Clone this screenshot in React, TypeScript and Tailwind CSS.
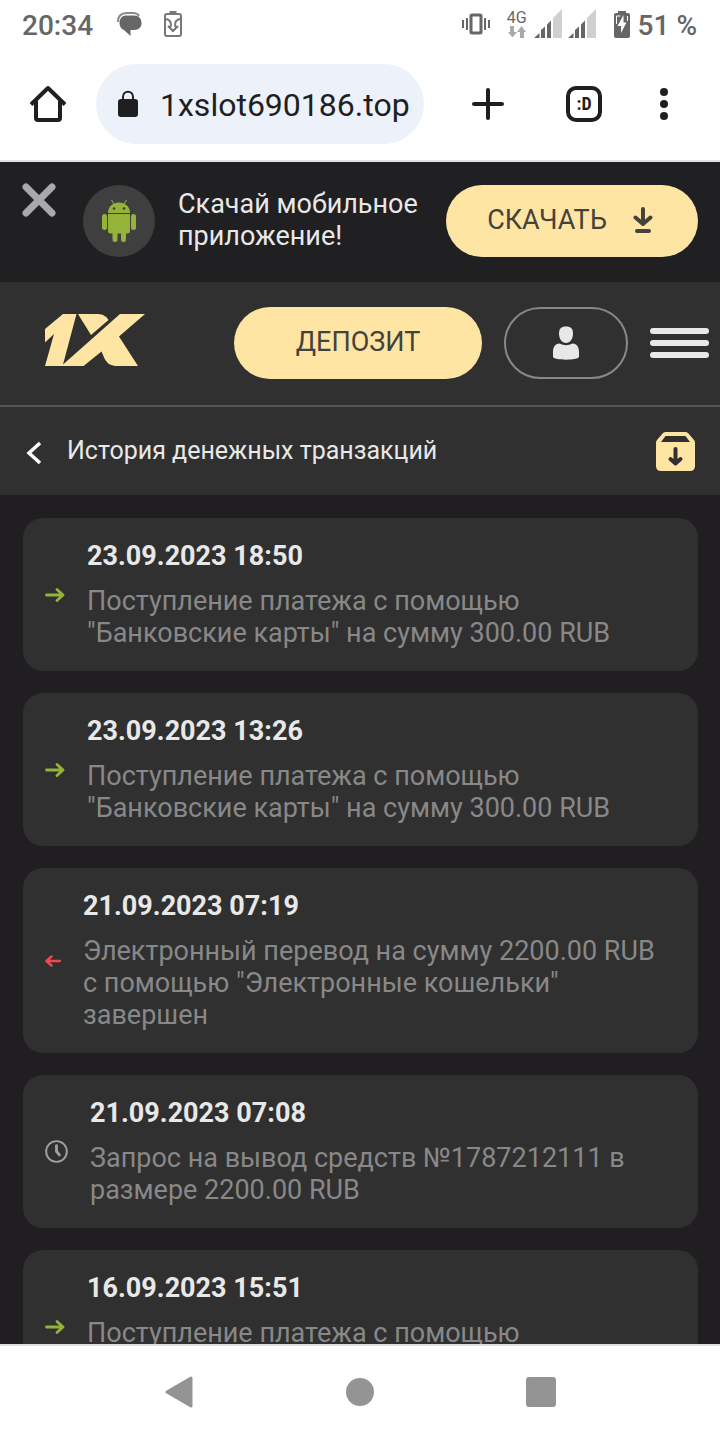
type Kind = 'in' | 'out' | 'pending'

interface Transaction {
    date: string
    text: string
    kind: Kind
}

const transactions: Transaction[] = [
    { date: '23.09.2023 18:50', text: 'Поступление платежа с помощью "Банковские карты" на сумму 300.00 RUB', kind: 'in' },
    { date: '23.09.2023 13:26', text: 'Поступление платежа с помощью "Банковские карты" на сумму 300.00 RUB', kind: 'in' },
    { date: '21.09.2023 07:19', text: 'Электронный перевод на сумму 2200.00 RUB с помощью "Электронные кошельки" завершен', kind: 'out' },
    { date: '21.09.2023 07:08', text: 'Запрос на вывод средств №1787212111 в размере 2200.00 RUB', kind: 'pending' },
    { date: '16.09.2023 15:51', text: 'Поступление платежа с помощью "Банковские карты" на сумму 300.00 RUB', kind: 'in' },
]

const Signal = () => (
    <svg width="28" height="30" viewBox="0 0 28 30">
        <path d="M0 29L5.500 24V29ZM7 29V21L11 17.500V29ZM13 29V15.500L17 11.500V29Z" fill="#666" />
        <path d="M19 29V9L28 0V29Z" fill="#d0d0d0" />
    </svg>
)

const StatusBar = () => (
    <div className="flex h-12 shrink-0 items-center justify-between pr-[23px] pl-[22px] text-[28px] font-medium text-[#666]">
        <div className="flex items-center">
            <span className="mt-1">20:34</span>
            <svg className="ml-6" width="26" height="26" viewBox="0 0 26 26">
                <path d="M1 11C1 4 5 2 10 2H16C19 2 21 3 22 5" fill="none" stroke="#888" strokeWidth="2" />
                <path d="M9 4.500H17C22 4.500 24.500 8 24.500 12C24.500 16 22 19 17 19H13.500V25L7 19C4 18 2.500 15 2.500 12C2.500 8 5 4.500 9 4.500Z" fill="#666" />
            </svg>
            <svg className="ml-5" width="20" height="26" viewBox="0 0 20 26" fill="none" stroke="#777" strokeWidth="2">
                <path d="M6.500 1H13.500" strokeWidth="3" />
                <rect x="2" y="3" width="16" height="22" rx="2" />
                <path d="M3 8C8 9 9 13 7 17M17 8C12 9 11 13 13 17M5 15L10 20L15 15" />
            </svg>
        </div>
        <div className="flex items-center">
            <svg width="28" height="22" viewBox="0 0 28 22" fill="none" stroke="#666" strokeWidth="2">
                <rect x="9" y="2" width="10" height="18" rx="1" strokeWidth="3" />
                <path d="M5 5V17M23 5V17M1 7V15M27 7V15" />
            </svg>
            <div className="ml-[18px] flex w-[18px] flex-col items-center">
                <span className="text-base leading-4 font-normal">4G</span>
                <svg width="18" height="12" viewBox="0 0 18 12" fill="#aaa">
                    <path d="M2 0H6V6H9L4.500 11.500L0 6H2ZM12 12H16V6H18L13.500 0L9 6H12Z" />
                </svg>
            </div>
            <div className="ml-2 flex gap-[6px]">
                <Signal />
                <Signal />
            </div>
            <svg className="ml-[18px] mr-2" width="16" height="27" viewBox="0 0 16 27">
                <path d="M4 0H12V2H14Q16 2 16 4V25Q16 27 14 27H2Q0 27 0 25V4Q0 2 2 2H4Z" fill="#666" />
                <path d="M9.500 4L3.500 15H7V22L12.500 11.500H9.500Z" fill="#fff" />
                <path d="M2.500 13V5H6.500M13.500 5V10" fill="none" stroke="#fff" />
            </svg>
            <span className="mt-1">51 %</span>
        </div>
    </div>
)

const BrowserBar = () => (
    <div className="flex h-[114px] shrink-0 items-start border-b-2 border-[#e0e0e0] pt-4 pl-7">
        <button aria-label="Home" className="flex h-20 w-10 items-center justify-center">
            <svg width="40" height="40" viewBox="0 0 40 40" fill="none" stroke="#1f1f1f" strokeWidth="4" strokeLinejoin="round">
                <path d="M3 20.500L20 4L37 20.500M8 17V34Q8 36 10 36H30Q32 36 32 34V17" />
            </svg>
        </button>
        <div className="ml-7 flex h-20 min-w-0 flex-1 items-center rounded-full bg-[#ecf1fa] pl-[22px]">
            <svg width="20" height="28" viewBox="0 0 20 28">
                <rect y="9" width="20" height="18" rx="3" fill="#1f1f1f" />
                <path d="M5 10V7C5 0 15 0 15 7V10" fill="none" stroke="#1f1f1f" strokeWidth="2" />
            </svg>
            <input aria-label="URL" defaultValue="1xslot690186.top" className="ml-[22px] min-w-0 flex-1 bg-transparent pt-[2px] text-[32px] text-[#1f1f1f] outline-none" />
        </div>
        <div className="flex h-20 w-[296px] shrink-0 items-center justify-between pr-[52px] pl-12">
            <button aria-label="New tab" className="pr-1">
                <svg width="32" height="32" viewBox="0 0 32 32" stroke="#1f1f1f" strokeWidth="4" strokeLinecap="round">
                    <path d="M16 2V30M2 16H30" />
                </svg>
            </button>
            <button aria-label="Tabs" className="flex size-9 items-center justify-center rounded-[10px] border-4 border-[#1f1f1f] font-[Roboto_Condensed,Roboto,sans-serif] text-lg font-bold text-[#1f1f1f]">
                :D
            </button>
            <button aria-label="Menu">
                <svg width="8" height="32" viewBox="0 0 8 32" fill="#1f1f1f">
                    <circle cx="4" cy="4" r="4" />
                    <circle cx="4" cy="16" r="4" />
                    <circle cx="4" cy="28" r="4" />
                </svg>
            </button>
        </div>
    </div>
)

const AppBanner = () => (
    <div className="flex h-[120px] shrink-0 items-center bg-[#202022] px-[22px] pb-[2px]">
        <button aria-label="Закрыть" className="mt-[21px] self-start">
            <svg width="34" height="34" viewBox="0 0 34 34" stroke="#a9a9ab" strokeWidth="7" strokeLinecap="round">
                <path d="M4 4L30 30M30 4L4 30" />
            </svg>
        </button>
        <div className="ml-[27px] flex size-[72px] shrink-0 items-center justify-center rounded-full bg-[#3f3f3f]">
            <svg width="34" height="42" viewBox="0 0 34 42" fill="#95b339">
                <path d="M6 13C6 -1 28 -1 28 13Z" />
                <path d="M12 4L9.500 0M22 4L24.500 0" stroke="#95b339" strokeWidth="1" />
                <path d="M6 14H28V31Q28 33.500 25.500 33.500H24V39.500Q24 42 21.500 42Q19 42 19 39.500V33.500H15.500V39.500Q15.500 42 13 42Q10.500 42 10.500 39.500V33.500H8.500Q6 33.500 6 31Z" />
                <rect y="14" width="5" height="16" rx="2.500" />
                <rect x="29" y="14" width="5" height="16" rx="2.500" />
                <circle cx="12" cy="8.500" r="1.300" fill="#3f3f3f" />
                <circle cx="22" cy="8.500" r="1.300" fill="#3f3f3f" />
            </svg>
        </div>
        <p className="ml-[23px] min-w-0 flex-1 pb-[2px] text-[27px] leading-8 text-[#e8e8e8]">Скачай мобильное приложение!</p>
        <button className="flex h-[72px] w-[252px] shrink-0 items-center justify-center gap-[26px] rounded-full bg-[#ffe5a3] pr-1 pb-[2px] text-[27px] text-[#44423c]">
            СКАЧАТЬ
            <svg width="20" height="26" viewBox="0 0 20 26" fill="none" stroke="#44423c" strokeWidth="4" strokeLinecap="round" strokeLinejoin="round">
                <path d="M10 2V17M2.500 10.500L10 17L17.500 10.500" />
                <path d="M4 24H16" />
            </svg>
        </button>
    </div>
)

const Header = () => (
    <header className="flex h-[125px] shrink-0 items-center border-b-2 border-[#555] bg-[#303030] pr-[11px] pb-[2px] pl-[45px]">
        <a href="#" aria-label="1X" className="mb-[6px]">
            <svg width="100" height="52" viewBox="0 0 100 52" fill="#ffe5a3">
                <path d="M0 15L18 0H31.500L18 50.500L75 0H100L74 22.500L93 52H73C61 52 60 45 56.500 37.500L38.500 52H0L9 20L0 28.500Z" />
                <path d="M33 0H53C58 0 62 3 63.500 6L46 21Z" />
            </svg>
        </a>
        <button className="ml-auto h-[72px] w-[248px] shrink-0 rounded-full bg-[#ffe5a3] text-[27px] text-[#44423c]">ДЕПОЗИТ</button>
        <button aria-label="Профиль" className="ml-[22px] flex h-[72px] w-[124px] shrink-0 items-center justify-center rounded-full border-2 border-[#888]">
            <svg width="26" height="34" viewBox="0 0 26 34" fill="#e8e8e8">
                <path d="M13 0.500C18 0.500 20 3 20 7.500C20 13 17 17 13 17C9 17 6 13 6 7.500C6 3 8 0.500 13 0.500Z" />
                <path d="M6.500 17.500Q13 21 19.500 17.500C24 18 26 21 26 26V31C25 34.500 1 34.500 0 31V26C0 21 2 18 6.500 17.500Z" />
            </svg>
        </button>
        <button aria-label="Меню" className="ml-[22px] flex w-[59px] shrink-0 flex-col gap-[6px]">
            <span className="h-[6px] w-full rounded-full bg-[#e8e8e8]"></span>
            <span className="h-[6px] w-full rounded-full bg-[#e8e8e8]"></span>
            <span className="h-[6px] w-full rounded-full bg-[#e8e8e8]"></span>
        </button>
    </header>
)

const TitleBar = () => (
    <div className="flex h-[88px] shrink-0 items-center bg-[#303030] pr-[25px] pl-[26px]">
        <button aria-label="Назад" className="pt-1">
            <svg width="16" height="24" viewBox="0 0 16 24" fill="none" stroke="#fff" strokeWidth="3.500">
                <path d="M14 2L3 12L14 22" />
            </svg>
        </button>
        <h1 className="ml-[25px] flex-1 text-[25px] text-[#e8e8e8]">История денежных транзакций</h1>
        <button aria-label="Архив">
            <svg width="39" height="39" viewBox="0 0 39 39">
                <path d="M10 0H29Q31 0 32 1L38 8Q39 9 39 11V34Q39 39 34 39H5Q0 39 0 34V11Q0 9 1 8L7 1Q8 0 10 0Z" fill="#ffe5a3" />
                <path d="M9.500 4H29.500L34 10H5Z" fill="#303030" />
                <path d="M19.500 17V31M14.500 27L19.500 31.500L24.500 27" fill="none" stroke="#303030" strokeWidth="4" strokeLinecap="round" strokeLinejoin="round" />
            </svg>
        </button>
    </div>
)

const KindIcon = ({ kind }: { kind: Kind }) => {
    if (kind === 'in') {
        return (
            <svg className="shrink-0" width="20" height="14" viewBox="0 0 20 14" fill="none" stroke="#95b339" strokeWidth="2.800" strokeLinecap="round" strokeLinejoin="round">
                <path d="M1.500 7H17.500M12 1.500L18 7L12 12.500" />
            </svg>
        )
    }
    if (kind === 'out') {
        return (
            <svg className="shrink-0" width="16" height="12" viewBox="0 0 16 12" fill="none" stroke="#f0484e" strokeWidth="2.400" strokeLinecap="round" strokeLinejoin="round">
                <path d="M15 6H2M6.500 1.500L1.500 6L6.500 10.500" />
            </svg>
        )
    }
    return (
        <svg className="shrink-0" width="23" height="23" viewBox="0 0 24 24" fill="none" stroke="#a0a0a0" strokeWidth="2" strokeLinecap="round">
            <circle cx="12" cy="12" r="10.800" />
            <path d="M12 6V12L15 15.500" strokeWidth="3" />
        </svg>
    )
}

const TransactionCard = ({ item }: { item: Transaction }) => (
    <li className="flex shrink-0 items-center gap-[22px] rounded-[20px] bg-[#303030] pt-[22px] pr-8 pb-[22px] pl-[22px]">
        <KindIcon kind={item.kind} />
        <div className="min-w-0 flex-1 text-[27px] leading-8">
            <h2 className="font-bold text-[#e8e8e8]">{item.date}</h2>
            <p className="mt-[13px] text-[#888]">{item.text}</p>
        </div>
    </li>
)

const NavBar = () => (
    <nav className="flex h-24 shrink-0 items-center justify-around border-t-2 border-[#e0e0e0] bg-white px-[88px] pb-[2px]">
        <button aria-label="Back">
            <svg width="30" height="32" viewBox="0 0 30 32">
                <path d="M27 2V30L3 16Z" fill="#949494" stroke="#949494" strokeWidth="3" strokeLinejoin="round" />
            </svg>
        </button>
        <button aria-label="Home" className="size-7 rounded-full bg-[#949494]"></button>
        <button aria-label="Recent" className="size-[30px] rounded-[3px] bg-[#949494]"></button>
    </nav>
)

export default function App() {
    return (
        <div className="flex h-screen flex-col bg-white font-[Roboto,sans-serif]">
            <StatusBar />
            <BrowserBar />
            <AppBanner />
            <Header />
            <TitleBar />
            <main className="min-h-0 flex-1 overflow-hidden bg-[#201e21] px-[22px] pt-[23px] pl-[23px]">
                <ul className="flex flex-col gap-[22px]">
                    {transactions.map((item) => (
                        <TransactionCard key={item.date} item={item} />
                    ))}
                </ul>
            </main>
            <NavBar />
        </div>
    )
}
